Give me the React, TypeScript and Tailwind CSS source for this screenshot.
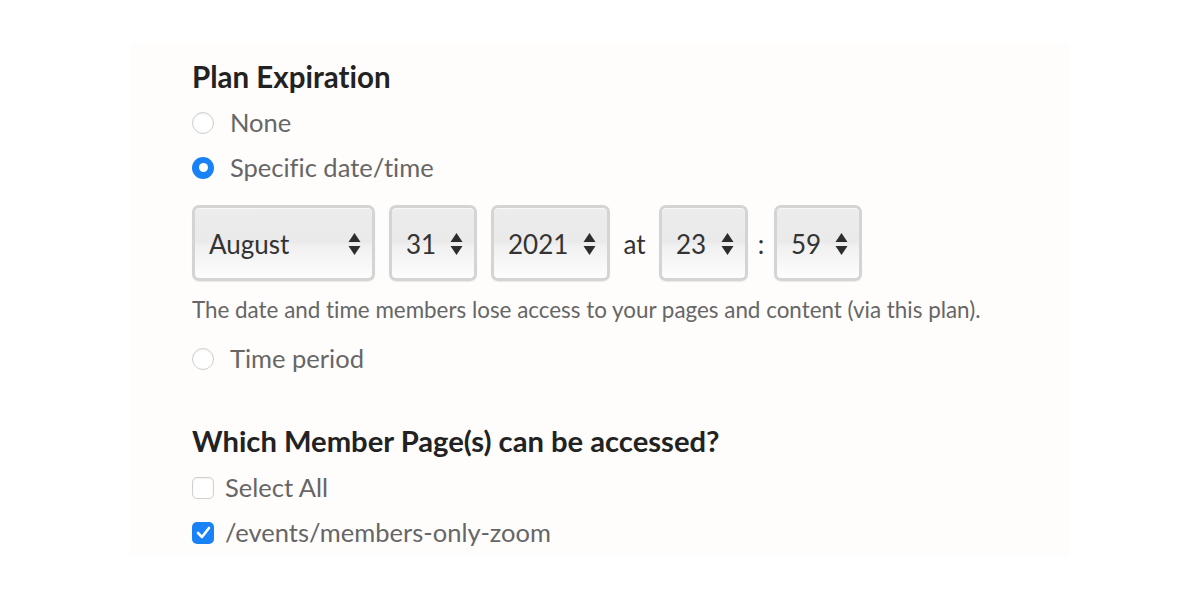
import React from "react";

const font = { fontFamily: "Lato, 'Noto Sans', sans-serif" };

function Arrows() {
  return (
    <svg width="13" height="24" viewBox="0 0 13 24" className="shrink-0">
      <path d="M6.5 1 L12.5 10 L0.5 10 Z" fill="#2d2d2d" />
      <path d="M6.5 23 L12.5 14 L0.5 14 Z" fill="#2d2d2d" />
    </svg>
  );
}

function SelectBox({ value, width }: { value: string; width: string }) {
  return (
    <div
      className={`${width} h-[76px] flex items-center justify-between pl-[14px] pr-[11px] pt-[2px] rounded-[7px] border-[3px] border-[#d4d4d4] bg-[linear-gradient(to_bottom,#ececec_0%,#eaeaea_49%,#f0f0f0_53%,#fdfdfd_100%)] shadow-[inset_0_1px_0_#f8f8f8,0_1px_1px_rgba(0,0,0,0.08)] text-[26px] text-[#333]`}
    >
      <span>{value}</span>
      <Arrows />
    </div>
  );
}

function Radio({ checked }: { checked?: boolean }) {
  if (checked) {
    return (
      <span className="w-[22px] h-[22px] rounded-full bg-[#1a82f7] flex items-center justify-center shrink-0">
        <span className="w-[9px] h-[9px] rounded-full bg-white" />
      </span>
    );
  }
  return (
    <span className="w-[22px] h-[22px] rounded-full border border-[#cfcfcf] bg-white shadow-[inset_0_1px_2px_rgba(0,0,0,0.06)] shrink-0" />
  );
}

function Checkbox({ checked }: { checked?: boolean }) {
  if (checked) {
    return (
      <span className="w-[22px] h-[22px] rounded-[5px] bg-[#1a82f7] flex items-center justify-center shrink-0">
        <svg width="15" height="13" viewBox="0 0 15 13">
          <path d="M2 7 L6 11 L13 2" stroke="white" strokeWidth="2.6" fill="none" strokeLinecap="round" strokeLinejoin="round" />
        </svg>
      </span>
    );
  }
  return (
    <span className="w-[22px] h-[22px] rounded-[5px] border border-[#cfcfcf] bg-white shadow-[inset_0_1px_2px_rgba(0,0,0,0.06)] shrink-0" />
  );
}

export default function App() {
  return (
    <div className="w-[1200px] h-[600px] bg-white pt-[43px] [font-variant-ligatures:none]" style={font}>
      <div className="ml-[130px] w-[939px] h-[513px] bg-[#fefdfc] pl-[62px] pt-[16px] flex flex-col">
        <h2 className="h-[36px] flex items-center text-[29.5px] font-bold text-[#222] leading-none">
          Plan Expiration
        </h2>
        <label className="h-[45px] mt-[5px] flex items-center gap-[16px] text-[25.5px] text-[#666]">
          <Radio />
          <span>None</span>
        </label>
        <label className="h-[45px] flex items-center gap-[16px] text-[25.5px] text-[#666]">
          <Radio checked />
          <span>Specific date/time</span>
        </label>
        <div className="mt-[15px] flex items-center">
          <SelectBox value="August" width="w-[183px]" />
          <div className="w-[14px]" />
          <SelectBox value="31" width="w-[88px]" />
          <div className="w-[14px]" />
          <SelectBox value="2021" width="w-[119px]" />
          <span className="w-[49px] text-center text-[26px] text-[#333] pt-[2px]">at</span>
          <SelectBox value="23" width="w-[89px]" />
          <span className="w-[26px] text-center text-[26px] text-[#333] pt-[2px]">:</span>
          <SelectBox value="59" width="w-[88px]" />
        </div>
        <p className="mt-[15px] h-[28px] flex items-center text-[22.4px] text-[#666] whitespace-nowrap">
          The date and time members lose access to your pages and content (via this plan).
        </p>
        <label className="h-[45px] mt-[12px] flex items-center gap-[16px] text-[25.5px] text-[#666]">
          <Radio />
          <span>Time period</span>
        </label>
        <h2 className="h-[36px] mt-[42px] flex items-center text-[29.2px] font-bold text-[#222] leading-none">
          Which Member Page(s) can be accessed?
        </h2>
        <label className="h-[45px] mt-[6px] flex items-center gap-[11px] text-[25.5px] text-[#666]">
          <Checkbox />
          <span>Select All</span>
        </label>
        <label className="h-[45px] flex items-center gap-[11px] text-[25.5px] text-[#666]">
          <Checkbox checked />
          <span>/events/members-only-zoom</span>
        </label>
      </div>
    </div>
  );
}
